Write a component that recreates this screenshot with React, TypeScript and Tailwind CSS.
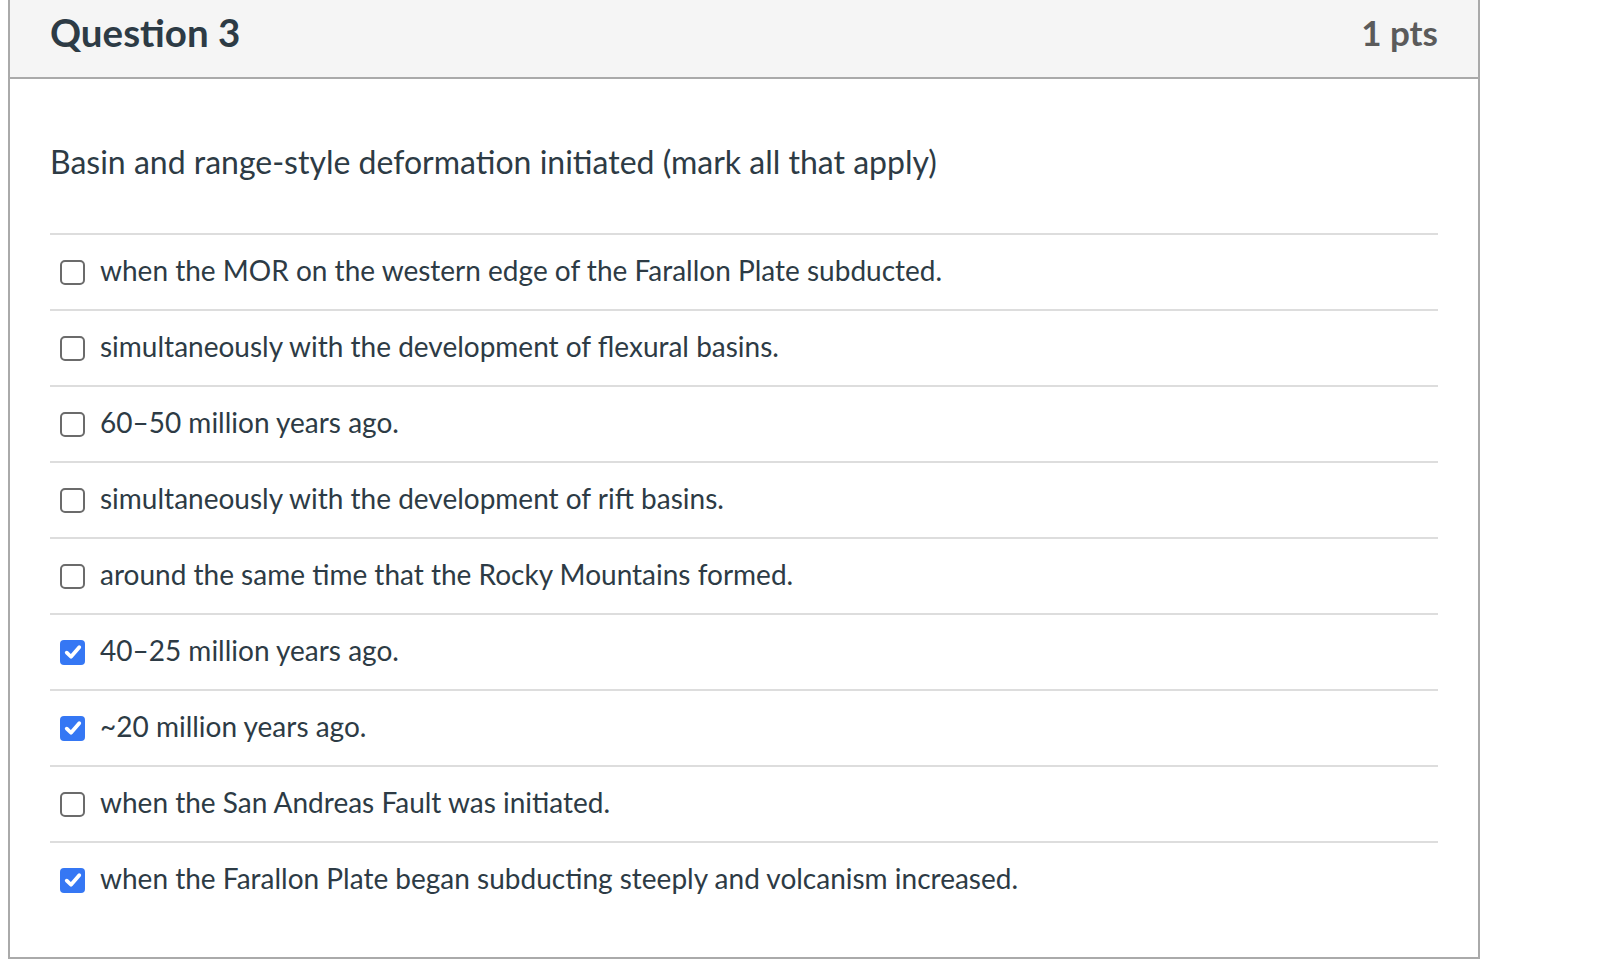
import React from "react";

const options: { text: string; checked: boolean }[] = [
  { text: "when the MOR on the western edge of the Farallon Plate subducted.", checked: false },
  { text: "simultaneously with the development of flexural basins.", checked: false },
  { text: "60\u201350 million years ago.", checked: false },
  { text: "simultaneously with the development of rift basins.", checked: false },
  { text: "around the same time that the Rocky Mountains formed.", checked: false },
  { text: "40\u201325 million years ago.", checked: true },
  { text: "~20 million years ago.", checked: true },
  { text: "when the San Andreas Fault was initiated.", checked: false },
  { text: "when the Farallon Plate began subducting steeply and volcanism increased.", checked: true },
];

function Box({ checked }: { checked: boolean }) {
  if (checked) {
    return (
      <div className="w-[25px] h-[25px] rounded-[4px] bg-[#3577f4] flex items-center justify-center shrink-0">
        <svg width="20" height="20" viewBox="0 0 16 16">
          <path d="M3 8.5 L6.4 11.8 L13 4.2" fill="none" stroke="#ffffff" strokeWidth="3" strokeLinecap="round" strokeLinejoin="round" />
        </svg>
      </div>
    );
  }
  return <div className="w-[25px] h-[25px] rounded-[5px] border-2 border-[#6b6b6b] bg-white shrink-0" />;
}

export default function App() {
  return (
    <div className="min-h-[976px] bg-white" style={{ fontFamily: "Lato, 'Open Sans', sans-serif" }}>
      <div className="ml-[8px] w-[1472px] border-2 border-t-0 border-[#aaaaaa]">
        <div className="h-[79px] bg-[#f5f5f5] border-b-2 border-[#aaaaaa] px-[40px] pt-[9px] flex justify-between items-baseline">
          <div className="text-[38.5px] font-bold text-[#2d3b45] leading-[1.2]">Question 3</div>
          <div className="text-[35px] font-bold text-[#5b5b5b] leading-[1.2] -translate-y-[1px]">1 pts</div>
        </div>
        <div className="px-[40px] pt-[63px] pb-[40px]">
          <div className="text-[32px] text-[#2d3b45] leading-[40px] mb-[51px]">
            Basin and range-style deformation initiated (mark all that apply)
          </div>
          <div>
            {options.map((o, i) => (
              <div key={i} className="h-[76px] border-t-2 border-[#dddddd] flex items-center pl-[10px] gap-[15px]">
                <Box checked={o.checked} />
                <span className="text-[28px] text-[#2d3b45] leading-[34px] mb-[4px]">{o.text}</span>
              </div>
            ))}
          </div>
        </div>
      </div>
    </div>
  );
}
